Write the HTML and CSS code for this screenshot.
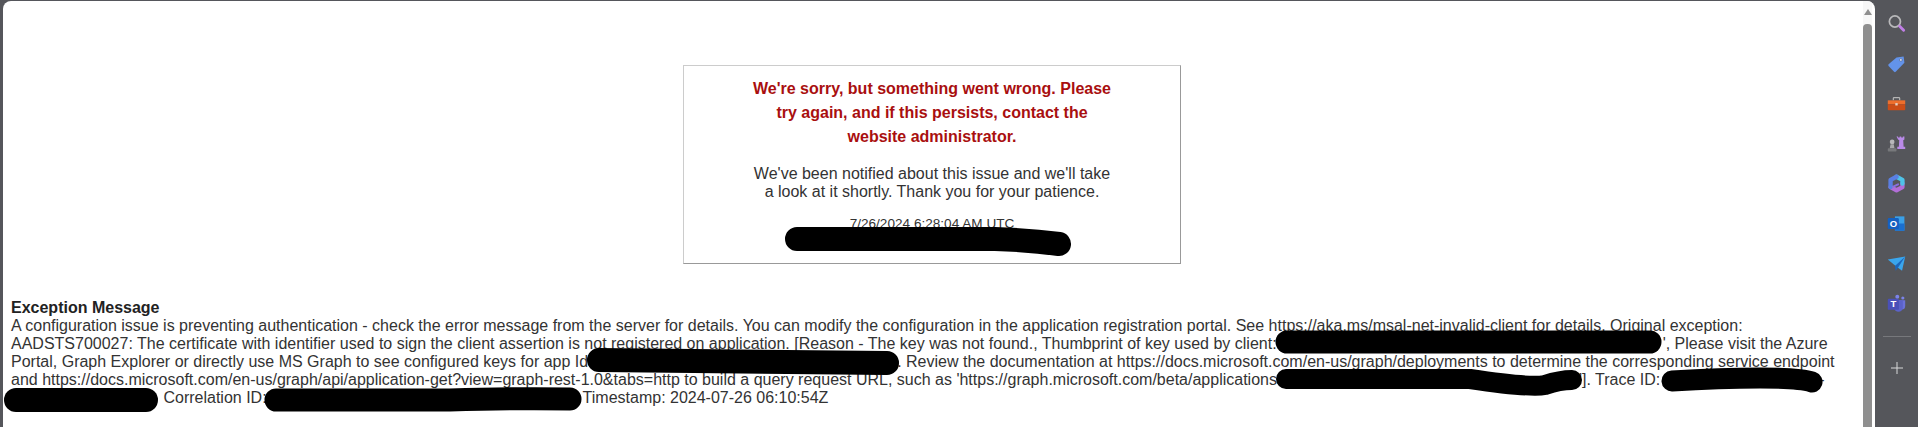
FILE: index.html
```html
<!DOCTYPE html>
<html lang="en">
<head>
  <meta charset="UTF-8">
  <title>Error</title>
  <link rel="stylesheet" href="styles.css">
</head>
<body>
  <div class="page">
    <div class="content">
      <div class="error-box">
        <h1 class="error-title">We're sorry, but something went wrong. Please try again, and if this persists, contact the website administrator.</h1>
        <p class="error-text">We've been notified about this issue and we'll take a look at it shortly. Thank you for your patience.</p>
        <p class="error-date">7/26/2024 6:28:04 AM UTC</p>
      </div>

      <div class="exception">
        <strong>Exception Message</strong><br>
        A configuration issue is preventing authentication - check the error message from the server for details. You can modify the configuration in the application registration portal. See https://aka.ms/msal-net-invalid-client for details. Original exception:<br>
        AADSTS700027: The certificate with identifier used to sign the client assertion is not registered on application. [Reason - The key was not found., Thumbprint of key used by client:'<span class="gap gap-thumb"></span>', Please visit the Azure<br>
        Portal, Graph Explorer or directly use MS Graph to see configured keys for app Id<span class="gap gap-app"></span>. Review the documentation at https://docs.microsoft.com/en-us/graph/deployments to determine the corresponding service endpoint<br>
        and https://docs.microsoft.com/en-us/graph/api/application-get?view=graph-rest-1.0&amp;tabs=http to build a query request URL, such as 'https://graph.microsoft.com/beta/applications<span class="gap gap-url"></span>']. Trace ID:<span class="gap gap-trace"></span>-<br>
        <span class="gap gap-trace2"></span> Correlation ID:<span class="gap gap-corr"></span>Timestamp: 2024-07-26 06:10:54Z
      </div>
    </div>

    <div class="scrollbar">
      <div class="scroll-arrow"></div>
      <div class="scroll-thumb"></div>
    </div>
  </div>

  <div class="sidebar">
    <svg class="side-icon" viewBox="0 0 24 24">
      <circle cx="10" cy="9.500" r="7" fill="none" stroke="#b9b9bb" stroke-width="2.200"/>
      <path d="M16 15.500l5 5" stroke="#c07fe6" stroke-width="3.600" stroke-linecap="round"/>
    </svg>
    <svg class="side-icon" viewBox="0 0 24 24">
      <path d="M12 4.500l9-1.500 1 8-11 11.500a1.500 1.500 0 0 1-2 0l-7-7.500a1.500 1.500 0 0 1 0-2z" fill="#6393ea"/>
      <circle cx="17.500" cy="7.500" r="1.700" fill="#dfe8fa" stroke="#33456d" stroke-width=".6"/>
    </svg>
    <svg class="side-icon" viewBox="0 0 24 24">
      <path d="M8 8V5.500q0-1 1-1h6q1 0 1 1V8" fill="none" stroke="#b5b5b5" stroke-width="1.500"/>
      <path d="M1 8h22v5H1z" fill="#ee6f2d"/>
      <path d="M1 13h22v6.500a1 1 0 0 1-1 1H2a1 1 0 0 1-1-1z" fill="#cc4d17"/>
      <rect x="10.500" y="11.500" width="3" height="3" fill="#e5d2c4"/>
    </svg>
    <svg class="side-icon" viewBox="0 0 24 24">
      <path d="M13 7h2v1.500h2V7h2v1.500h2V7h2v4l-1.500 1 .5 8h2v3h-10v-3h2l.5-8-1.500-1z" fill="#b98ae8" transform="translate(-1 -4)"/>
      <circle cx="6.500" cy="10" r="3" fill="#b8b8ba"/>
      <path d="M4.500 13h4l1 5h-6z" fill="#a8a8aa"/>
      <rect x="1" y="18" width="11" height="4" rx="1" fill="#77787b"/>
    </svg>
    <svg class="side-icon" viewBox="0 0 24 24">
      <g fill="none" stroke-width="5.500" stroke-linecap="round" stroke-linejoin="round">
        <path d="M4.500 16.500L12 20.500L19.500 16.500V12" stroke="#b26ed8"/>
        <path d="M12 3.500L19.500 7.500V12" stroke="#4fc3e8"/>
        <path d="M12 3.500L4.500 7.500V16.500" stroke="#5a7fe2"/>
      </g>
      <path d="M8 16L14 13" stroke="#8a6fe0" stroke-width="2.500" stroke-linecap="round"/>
    </svg>
    <svg class="side-icon" viewBox="0 0 24 24">
      <path d="M10 3h12v18H10z" fill="#3aa0e8"/>
      <path d="M13 12h9v9H10v-6z" fill="#1a6fd0"/>
      <rect x="1" y="5" width="14" height="14" rx="1.500" fill="#1560c0"/>
      <text class="icon-letter" x="8" y="16.500" text-anchor="middle">O</text>
    </svg>
    <svg class="side-icon" viewBox="0 0 24 24">
      <path d="M1 7l22-4-4 18-8-6z" fill="#3aa6ee"/>
      <path d="M23 3L10 15l1 6 3-4z" fill="#1c66bc"/>
    </svg>
    <svg class="side-icon" viewBox="0 0 24 24">
      <circle cx="13" cy="3.500" r="2.500" fill="#7b83eb"/>
      <circle cx="20" cy="5" r="2" fill="#7b83eb"/>
      <path d="M14 8h9v7a4.500 4.500 0 0 1-9 0z" fill="#6a71d8"/>
      <path d="M9 8h11v9a5.500 5.500 0 0 1-11 0z" fill="#5b62c9"/>
      <rect x="1" y="6" width="14" height="14" rx="1.500" fill="#4a50b8"/>
      <text class="icon-letter" x="8" y="17" text-anchor="middle">T</text>
    </svg>
    <div class="side-divider"></div>
    <svg class="side-plus" viewBox="0 0 12 12">
      <path d="M6 0v12M0 6h12" stroke="#d8d8da" stroke-width="1"/>
    </svg>
  </div>

  <!-- black marker strokes drawn over the text -->
  <svg class="redactions" viewBox="0 0 1918 427">
    <g fill="none" stroke="#000" stroke-linecap="round" stroke-linejoin="round">
      <path stroke-width="24" d="M797 239H995Q1030 240 1059 244"/>
      <path stroke-width="23" d="M1287 342H1650"/>
      <path stroke-width="24" d="M599 360Q750 362 887 363"/>
      <path stroke-width="20" d="M1286 379H1470Q1530 388 1545 385Q1560 380 1572 380"/>
      <path stroke-width="21" d="M1672 381Q1720 378 1760 378Q1800 378 1812 382"/>
      <path stroke-width="24" d="M16 400H146"/>
      <path stroke-width="23" d="M276 400H450Q520 398 570 399"/>
    </g>
  </svg>
</body>
</html>
```

FILE: styles.css
```css
* {
  box-sizing: border-box;
}

html, body {
  margin: 0;
  height: 100%;
  overflow: hidden;
}

body {
  position: relative;
  display: flex;
  padding: 1px 0 0 3px;
  background: #55565b;
  font-family: "Liberation Sans", Arial, sans-serif;
  font-size: 16px;
  color: #333;
}

.page {
  flex: 1;
  display: flex;
  background: #fff;
  border-radius: 8px 8px 0 0;
  overflow: hidden;
}

.content {
  flex: 1;
  padding: 64px 10px 0 8px;
}

.error-box {
  width: 498px;
  height: 199px;
  margin: 0 auto 35px;
  padding-top: 11px;
  border: 1px solid #999;
  border-top-color: #ccc;
  border-left-color: #ccc;
  text-align: center;
}

.error-title {
  width: 370px;
  margin: 0 auto 16px;
  font-size: 16px;
  line-height: 24px;
  color: #a90f0f;
}

.error-text {
  width: 362px;
  margin: 0 auto 14px;
  line-height: 18px;
}

.error-date {
  margin: 0;
  font-size: 13.6px;
  line-height: 18px;
}

.exception {
  line-height: 18px;
  white-space: nowrap;
}

.exception strong {
  color: #222;
}

.gap {
  display: inline-block;
}

.gap-thumb { width: 383px; }
.gap-app { width: 309px; }
.gap-url { width: 302px; }
.gap-trace { width: 159px; }
.gap-trace2 { width: 148px; }
.gap-corr { width: 316px; }

.scrollbar {
  width: 9px;
  margin-right: 3px;
  padding-top: 8px;
  display: flex;
  flex-direction: column;
  align-items: center;
  background: #f7f7f7;
}

.scroll-arrow {
  width: 0;
  height: 0;
  margin-bottom: 9px;
  border-left: 4.5px solid transparent;
  border-right: 4.5px solid transparent;
  border-bottom: 6px solid #8f8f8f;
}

.scroll-thumb {
  flex: 1;
  width: 100%;
  background: #8f8f8f;
  border-radius: 4px 4px 0 0;
}

.sidebar {
  width: 43px;
  display: flex;
  flex-direction: column;
  align-items: center;
  padding-top: 13px;
  gap: 21px;
}

.side-icon {
  width: 19px;
  height: 19px;
  flex-shrink: 0;
}

.icon-letter {
  font-family: "Liberation Sans", Arial, sans-serif;
  font-size: 12px;
  font-weight: bold;
  fill: #fff;
}

.side-divider {
  flex-shrink: 0;
  width: 28px;
  height: 1px;
  margin-top: 2px;
  background: #77787c;
}

.side-plus {
  flex-shrink: 0;
  width: 12px;
  height: 12px;
  margin-top: 4px;
}

.redactions {
  position: absolute;
  top: 0;
  left: 0;
  width: 1918px;
  height: 427px;
  pointer-events: none;
}
```
